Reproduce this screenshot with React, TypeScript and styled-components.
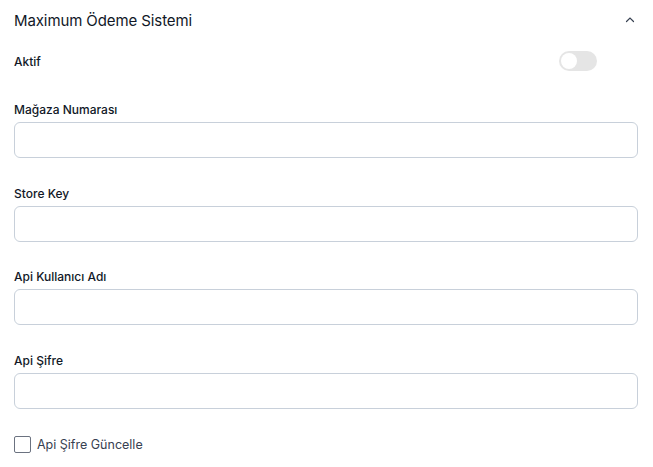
import React, { useState } from 'react';
import styled, { createGlobalStyle } from 'styled-components';

const GlobalStyle = createGlobalStyle`
  body {
    margin: 0;
    background: #ffffff;
    font-family: 'Inter', 'Noto Sans', sans-serif;
  }
`;

const Panel = styled.section`
  width: 653px;
  box-sizing: border-box;
  padding: 0 15px 0 14px;
`;

const Header = styled.div`
  display: flex;
  align-items: center;
  justify-content: space-between;
  height: 40px;
  padding-right: 2px;
`;

const Title = styled.h2`
  margin: 0;
  font-size: 15px;
  font-weight: 400;
  color: #111827;
  letter-spacing: -0.1px;
`;

const Chevron = styled.svg`
  width: 12px;
  height: 12px;
  color: #374151;
`;

const ToggleRow = styled.div`
  display: flex;
  align-items: center;
  justify-content: space-between;
  height: 24px;
  margin-top: 9px;
  padding-right: 41px;
`;

const Label = styled.label`
  display: block;
  font-size: 12px;
  font-weight: 500;
  color: #111827;
`;

const Switch = styled.button<{ on: boolean }>`
  position: relative;
  width: 38px;
  height: 20px;
  border: none;
  border-radius: 10px;
  padding: 0;
  background: ${(p) => (p.on ? '#2563eb' : '#e5e5e5')};
  cursor: pointer;

  &::after {
    content: '';
    position: absolute;
    top: 2px;
    left: ${(p) => (p.on ? '20px' : '2px')};
    width: 16px;
    height: 16px;
    border-radius: 50%;
    background: #ffffff;
    transition: left 0.2s;
  }
`;

const Fields = styled.div`
  display: flex;
  flex-direction: column;
  gap: 27.7px;
  margin-top: 29px;
`;

const Field = styled.div`
  display: flex;
  flex-direction: column;
  gap: 5px;
`;

const Input = styled.input`
  height: 36px;
  box-sizing: border-box;
  width: 100%;
  border: 1px solid #c8d0da;
  border-radius: 6px;
  padding: 0 12px;
  font: inherit;
  font-size: 13px;
  outline: none;
`;

const CheckRow = styled.label`
  display: flex;
  align-items: center;
  gap: 6px;
  margin-top: 27px;
  font-size: 12.5px;
  color: #374151;
  cursor: pointer;
`;

const Box = styled.span`
  width: 17px;
  height: 17px;
  box-sizing: border-box;
  border: 1px solid #6b7280;
  border-radius: 2px;
  background: #fff;
`;

const fields = ['Mağaza Numarası', 'Store Key', 'Api Kullanıcı Adı', 'Api Şifre'];

const App: React.FC = () => {
  const [active, setActive] = useState(false);

  return (
    <>
      <GlobalStyle />
      <Panel>
        <Header>
          <Title>Maximum Ödeme Sistemi</Title>
          <Chevron viewBox="0 0 12 12" fill="none" stroke="currentColor" strokeWidth="1.2" strokeLinecap="round">
            <path d="M2.5 7.5 L6 4 L9.5 7.5" />
          </Chevron>
        </Header>
        <ToggleRow>
          <Label>Aktif</Label>
          <Switch on={active} onClick={() => setActive(!active)} />
        </ToggleRow>
        <Fields>
          {fields.map((f) => (
            <Field key={f}>
              <Label>{f}</Label>
              <Input type={f === 'Api Şifre' ? 'password' : 'text'} />
            </Field>
          ))}
        </Fields>
        <CheckRow>
          <Box />
          Api Şifre Güncelle
        </CheckRow>
      </Panel>
    </>
  );
};

export default App;
